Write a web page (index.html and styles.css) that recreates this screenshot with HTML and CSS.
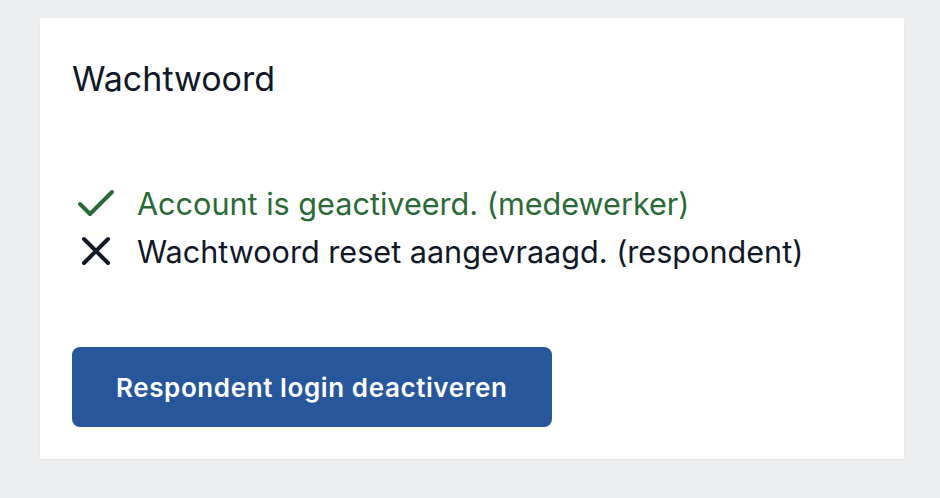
FILE: index.html
```html
<!DOCTYPE html>
<html lang="nl">
<head>
<meta charset="utf-8">
<title>Wachtwoord</title>
<link rel="stylesheet" href="styles.css">
</head>
<body>
<main class="page">
  <section class="card">
    <h2 class="card-title">Wachtwoord</h2>
    <ul class="status-list">
      <li class="status status-ok">
        <svg class="status-icon" viewBox="0 0 24 24" fill="none" stroke="currentColor" stroke-width="2" stroke-linecap="round" stroke-linejoin="round"><path d="M20 6 9 17l-5-5"/></svg>
        <span>Account is geactiveerd. (medewerker)</span>
      </li>
      <li class="status status-no">
        <svg class="status-icon" viewBox="0 0 24 24" fill="none" stroke="currentColor" stroke-width="2" stroke-linecap="round" stroke-linejoin="round"><path d="M18 6 6 18M6 6l12 12"/></svg>
        <span>Wachtwoord reset aangevraagd. (respondent)</span>
      </li>
    </ul>
    <button class="btn-primary" type="button">Respondent login deactiveren</button>
  </section>
</main>
</body>
</html>
```

FILE: styles.css
```css
html, body {
  margin: 0;
  padding: 0;
}
body {
  background: #edeef0;
  font-family: Inter, "Noto Sans", "Liberation Sans", sans-serif;
  color: #111827;
}
.page {
  padding: 18px 36px 38px 40px;
}
.card {
  background: #ffffff;
  padding: 39px 32px 32px 32px;
  box-shadow: 0 1px 2px rgba(0, 0, 0, 0.06);
  display: flex;
  flex-direction: column;
  align-items: flex-start;
}
.card-title {
  margin: 0;
  font-size: 34px;
  line-height: 44px;
  font-weight: 400;
  color: #111827;
}
.status-list {
  list-style: none;
  margin: 79px 0 0 0;
  padding: 0;
}
.status {
  display: flex;
  align-items: center;
  height: 47.5px;
  font-size: 30.6px;
  line-height: 47.5px;
}
.status-icon {
  width: 48px;
  height: 48px;
  flex: none;
  margin-right: 17px;
}
.status-ok {
  color: #2a6a37;
}
.status-no {
  color: #111827;
}
.btn-primary {
  margin-top: 72px;
  height: 80px;
  padding: 0 44px;
  border: 0;
  border-radius: 8px;
  background: #27569b;
  color: #ffffff;
  font-family: Inter, "Noto Sans", "Liberation Sans", sans-serif;
  font-size: 26px;
  letter-spacing: 0.6px;
  font-weight: 600;
}
```
